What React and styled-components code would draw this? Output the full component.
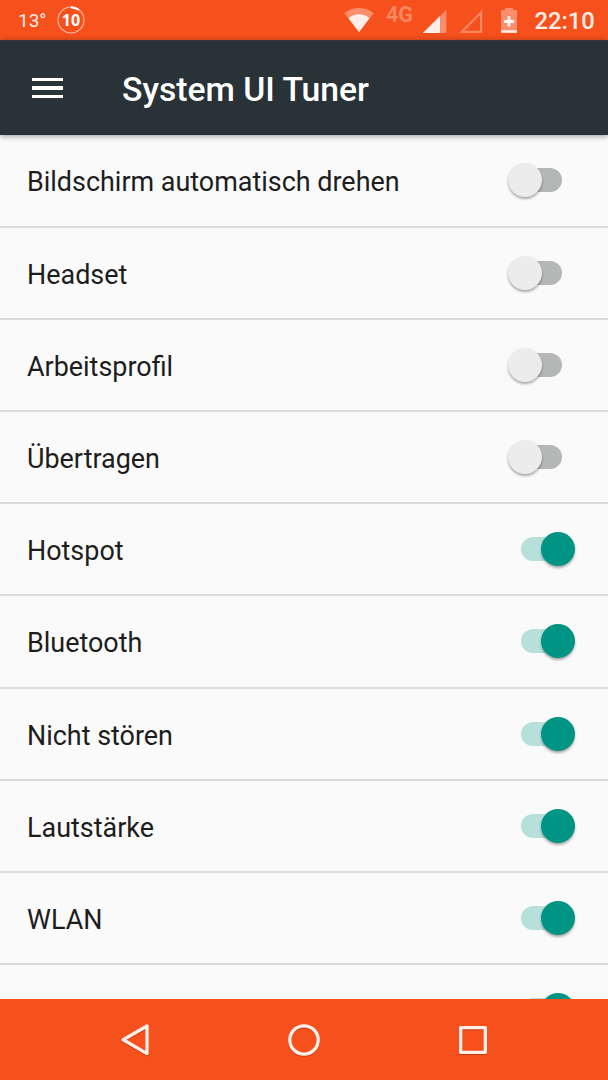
import React from 'react';
import styled, { createGlobalStyle } from 'styled-components';

const GlobalStyle = createGlobalStyle`
  * { box-sizing: border-box; }
  html, body { margin: 0; padding: 0; }
  body { font-family: Roboto, "Liberation Sans", sans-serif; overflow: hidden; }
  svg { display: block; flex: none; }
`;

const Screen = styled.div`
  display: flex;
  flex-direction: column;
  width: 608px;
  height: 1080px;
  overflow: hidden;
  background: #fafafa;
`;

const StatusBar = styled.div`
  flex: none;
  display: flex;
  align-items: center;
  height: 40px;
  padding: 0 14px 0 18px;
  background: #f6511d;
  color: #feeee9;
`;

const Temperature = styled.span`
  width: 39px;
  font-size: 19px;
  line-height: 24px;
  padding-top: 1px;
`;

const Spacer = styled.div`
  flex: 1;
`;

const NetworkType = styled.span`
  width: 31px;
  margin: 0 6px 10px 12px;
  font-size: 21.5px;
  line-height: 24px;
  font-weight: 700;
  color: #f98561;
`;

const IconSlot = styled.div`
  margin-left: ${(p) => p.$gap}px;
`;

const Clock = styled.span`
  margin-left: 17.5px;
  width: 59.5px;
  font-size: 23.7px;
  line-height: 28px;
  font-weight: 500;
  padding-top: 2px;
  white-space: nowrap;
`;

const AppBar = styled.header`
  flex: none;
  z-index: 1;
  display: flex;
  align-items: center;
  height: 95px;
  padding-left: 32px;
  background: #283237;
  border-top: 1px solid #3a3434;
  box-shadow: 0 1px 6px rgba(0, 0, 0, 0.4);
`;

const MenuButton = styled.button`
  display: flex;
  flex-direction: column;
  gap: 5px;
  width: 31px;
  padding: 0;
  border: 0;
  background: none;
`;

const MenuLine = styled.span`
  height: 3.6px;
  background: #fff;
`;

const Title = styled.h1`
  margin: 3px 0 0 59px;
  font-size: 33.7px;
  line-height: 40px;
  font-weight: 500;
  color: #fff;
  white-space: nowrap;
`;

const List = styled.main`
  flex: 1;
  min-height: 0;
  padding-top: 0.4px;
  overflow: hidden;
`;

const Row = styled.div`
  display: flex;
  align-items: center;
  justify-content: space-between;
  height: 92.2px;
  padding: 0 32px 0 27px;
  border-bottom: 2px solid #dadada;
`;

const Label = styled.span`
  padding-top: 4px;
  font-size: 26.93px;
  line-height: 36px;
  color: #1d1d1d;
  white-space: nowrap;
`;

const Switch = styled.div`
  display: flex;
  align-items: center;
  width: 41px;
  height: 24px;
  margin-right: 14px;
  border-radius: 12px;
  justify-content: ${(p) => (p.$on ? 'flex-end' : 'flex-start')};
  background: ${(p) => (p.$on ? '#b7e0db' : '#b4b7b6')};
`;

const Thumb = styled.div`
  flex: none;
  width: 34px;
  height: 34px;
  margin: 0 -13px;
  border-radius: 50%;
  background: ${(p) => (p.$on ? '#009485' : '#ececec')};
  box-shadow: 0 2px 2.5px rgba(0, 0, 0, 0.32);
`;

const NavBar = styled.nav`
  flex: none;
  z-index: 1;
  display: flex;
  justify-content: center;
  align-items: center;
  gap: 129px;
  height: 81px;
  background: #f6511d;
`;

const NavShape = styled.svg`
  fill: none;
  stroke: #ffefea;
  stroke-width: 3.3;
  stroke-linejoin: round;
  filter: drop-shadow(0 1px 0.5px rgba(90, 20, 0, 0.35));
`;

const items = [
  ['Bildschirm automatisch drehen', false],
  ['Headset', false],
  ['Arbeitsprofil', false],
  ['Übertragen', false],
  ['Hotspot', true],
  ['Bluetooth', true],
  ['Nicht stören', true],
  ['Lautstärke', true],
  ['WLAN', true],
  ['', true],
];

const CountBadge = () => (
  <svg width="28" height="40" viewBox="0 0 28 40">
    <circle cx="14" cy="20" r="13" fill="none" stroke="#fcb9a4" strokeWidth="1.2" />
    <path d="M14 7.3A12.7 12.7 0 0 1 21.8 10" fill="none" stroke="#fff" strokeWidth="2.2" />
    <text x="14" y="26" textAnchor="middle" fontFamily='"Open Sans", sans-serif' fontSize="16" fontWeight="700" fill="#fff">10</text>
  </svg>
);

const WifiIcon = () => (
  <svg width="30" height="40" viewBox="0 0 30 40">
    <path d="M15 32L0.3 13.2Q6.5 8 15 8T29.7 13.2Z" fill="#fa8d6b" />
    <path d="M15 32L4.5 18.3Q9 14.2 15 14.2T25.5 18.3Z" fill="#feeee9" />
  </svg>
);

const SignalIcon = () => (
  <svg width="24" height="40" viewBox="0 0 24 40">
    <path d="M0 33L23.3 9.8V33Z" fill="#fa8d6b" />
    <path d="M0 33L17 16V33Z" fill="#feeee9" />
  </svg>
);

const EmptySignalIcon = () => (
  <svg width="24" height="40" viewBox="0 0 24 40">
    <path d="M2.8 31.8L22.1 12.5V31.8Z" fill="none" stroke="#f98561" strokeWidth="2.2" />
  </svg>
);

const BatteryIcon = () => (
  <svg width="16" height="40" viewBox="0 0 16 40">
    <path d="M4 10V8H12V10H15Q16 10 16 11V33H0V11Q0 10 1 10Z" fill="#fa8d6b" />
    <path d="M0 30.2H16V31.7Q16 32.7 15 32.7H1Q0 32.7 0 31.7Z" fill="#feeee9" />
    <path d="M8 16.3V26.5M2.9 21.4H13.1" stroke="#fff5f1" strokeWidth="3" />
  </svg>
);

export default function App() {
  return (
    <>
      <GlobalStyle />
      <Screen>
        <StatusBar>
          <Temperature>13°</Temperature>
          <CountBadge />
          <Spacer />
          <WifiIcon />
          <NetworkType>4G</NetworkType>
          <SignalIcon />
          <IconSlot $gap={12}><EmptySignalIcon /></IconSlot>
          <IconSlot $gap={18}><BatteryIcon /></IconSlot>
          <Clock>22:10</Clock>
        </StatusBar>
        <AppBar>
          <MenuButton aria-label="Menu">
            <MenuLine />
            <MenuLine />
            <MenuLine />
          </MenuButton>
          <Title>System UI Tuner</Title>
        </AppBar>
        <List>
          {items.map(([label, on]) => (
            <Row key={label}>
              <Label>{label}</Label>
              <Switch $on={on} role="switch" aria-checked={on}>
                <Thumb $on={on} />
              </Switch>
            </Row>
          ))}
        </List>
        <NavBar>
          <NavShape width="40" height="40" viewBox="0 0 40 40">
            <path d="M8.2 19.8L32 6V33.6Z" />
          </NavShape>
          <NavShape width="40" height="40" viewBox="0 0 40 40">
            <circle cx="20" cy="20" r="14.2" />
          </NavShape>
          <NavShape width="40" height="40" viewBox="0 0 40 40">
            <rect x="7.7" y="7.7" width="24.6" height="24.6" />
          </NavShape>
        </NavBar>
      </Screen>
    </>
  );
}
